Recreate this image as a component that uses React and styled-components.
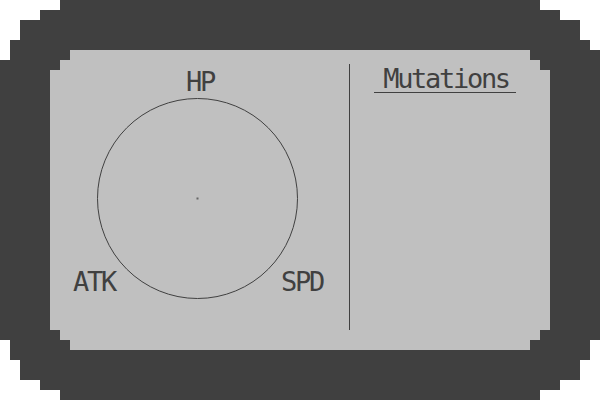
import React from "react";
import styled, { createGlobalStyle } from "styled-components";

const GlobalStyle = createGlobalStyle`
  html, body {
    margin: 0;
    padding: 0;
    background: #ffffff;
  }
`;

const DARK = "#404040";
const LIGHT = "#c0c0c0";

const Frame = styled.div`
  width: 600px;
  height: 400px;
  box-sizing: border-box;
  padding: 50px;
  display: flex;
  background: ${DARK};
  clip-path: polygon(
    60px 0, 540px 0, 540px 10px, 560px 10px, 560px 20px, 580px 20px,
    580px 40px, 590px 40px, 590px 50px, 600px 50px,
    600px 340px, 590px 340px, 590px 360px, 580px 360px, 580px 380px,
    560px 380px, 560px 390px, 540px 390px, 540px 400px,
    60px 400px, 60px 390px, 40px 390px, 40px 380px, 20px 380px,
    20px 360px, 10px 360px, 10px 340px, 0 340px,
    0 60px, 10px 60px, 10px 40px, 20px 40px, 20px 20px, 40px 20px,
    40px 10px, 60px 10px
  );
`;

const Panel = styled.div`
  flex: 1;
  display: grid;
  grid-template-columns: 299px 1px 1fr;
  background: ${LIGHT};
  color: ${DARK};
  font-family: "DejaVu Sans Mono", "Liberation Mono", monospace;
  clip-path: polygon(
    20px 0, 480px 0, 480px 10px, 490px 10px, 490px 20px, 500px 20px,
    500px 280px, 490px 280px, 490px 290px, 480px 290px, 480px 300px,
    20px 300px, 20px 290px, 10px 290px, 10px 280px, 0 280px,
    0 20px, 10px 20px, 10px 10px, 20px 10px
  );
`;

const Chart = styled.div`
  position: relative;
`;

const Ring = styled.svg`
  position: absolute;
  left: 47px;
  top: 48px;
  width: 201px;
  height: 201px;
`;

const Stat = styled.span`
  position: absolute;
  left: ${(p) => p.$x}px;
  top: ${(p) => p.$y}px;
  font-size: 27px;
  line-height: 1;
  letter-spacing: -2.3px;
`;

const Divider = styled.div`
  background: ${DARK};
  margin: 14px 0 20px;
`;

const Side = styled.div`
  display: flex;
  flex-direction: column;
  align-items: center;
  padding-top: 15px;
`;

const Title = styled.div`
  font-size: 27px;
  line-height: 1;
  letter-spacing: -2.3px;
  padding: 0 7px 0 9px;
  margin-right: 10px;
  border-bottom: 1px solid ${DARK};
`;

export default function App() {
  return (
    <>
      <GlobalStyle />
      <Frame>
        <Panel>
          <Chart>
            <Ring viewBox="0 0 201 201">
              <circle cx="100.5" cy="100.5" r="100" fill="none" stroke={DARK} strokeWidth="1" />
              <rect x="99.5" y="99.5" width="2" height="2" fill={DARK} opacity="0.7" />
            </Ring>
            <Stat $x={136} $y={18}>HP</Stat>
            <Stat $x={23} $y={218}>ATK</Stat>
            <Stat $x={231} $y={218}>SPD</Stat>
          </Chart>
          <Divider />
          <Side>
            <Title>Mutations</Title>
          </Side>
        </Panel>
      </Frame>
    </>
  );
}
